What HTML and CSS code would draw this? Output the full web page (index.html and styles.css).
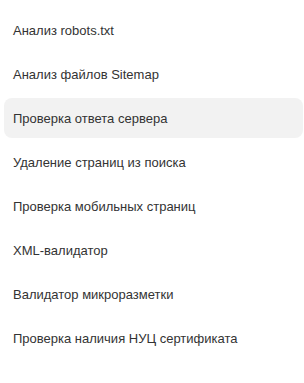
FILE: index.html
```html
<!DOCTYPE html>
<html lang="ru">

<head>
    <meta charset="UTF-8">
    <meta name="viewport" content="width=device-width, initial-scale=1.0">
    <title>Инструменты</title>
    <link rel="stylesheet" href="styles.css">
</head>

<body>
    <nav class="menu">
        <a class="menu-item" href="#">Анализ robots.txt</a>
        <a class="menu-item" href="#">Анализ файлов Sitemap</a>
        <a class="menu-item active" href="#">Проверка ответа сервера</a>
        <a class="menu-item" href="#">Удаление страниц из поиска</a>
        <a class="menu-item" href="#">Проверка мобильных страниц</a>
        <a class="menu-item" href="#">XML-валидатор</a>
        <a class="menu-item" href="#">Валидатор микроразметки</a>
        <a class="menu-item" href="#">Проверка наличия НУЦ сертификата</a>
    </nav>
</body>

</html>
```

FILE: styles.css
```css
body {
    font-family: 'Liberation Sans', Arial, sans-serif;
    margin: 0;
    padding: 0;
    background: #fff;
    color: #333;
}

.menu {
    display: flex;
    flex-direction: column;
    gap: 4px;
    padding: 10px 1px 10px 4px;
}

.menu-item {
    display: flex;
    align-items: center;
    height: 40px;
    padding-left: 9px;
    border-radius: 8px;
    font-size: 13px;
    color: #333;
    text-decoration: none;
}

.menu-item.active {
    background: #f2f2f2;
}
```
